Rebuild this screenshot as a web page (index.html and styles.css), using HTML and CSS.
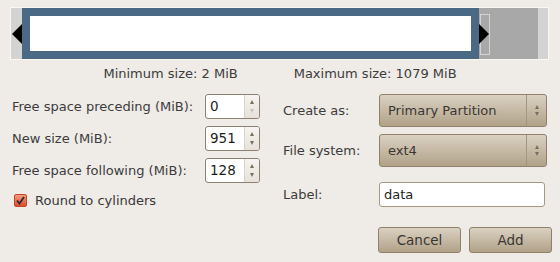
FILE: index.html
```html
<!DOCTYPE html>
<html lang="en">
<head>
    <meta charset="UTF-8">
    <title>Create new Partition</title>
    <link rel="stylesheet" href="styles.css">
</head>
<body>
    <!-- Barra da partição -->
    <div class="frame">
        <div class="gap-left"></div>
        <div class="part"><div class="part-inner"></div></div>
        <div class="gap-right"></div>
        <div class="gap-end"></div>
        <div class="handle-left"></div>
        <div class="handle-box"></div>
        <div class="handle-right"></div>
    </div>

    <div class="limits">
        <span>Minimum size: 2 MiB</span>
        <span>Maximum size: 1079 MiB</span>
    </div>

    <div class="form">
        <div class="col-left">
            <div class="row">
                <label>Free space preceding (MiB):</label>
                <div class="spin">
                    <span class="spin-value">0</span>
                    <span class="spin-btns"><i class="up"></i><i class="down off"></i></span>
                </div>
            </div>
            <div class="row">
                <label>New size (MiB):</label>
                <div class="spin">
                    <span class="spin-value">951</span>
                    <span class="spin-btns"><i class="up"></i><i class="down"></i></span>
                </div>
            </div>
            <div class="row">
                <label>Free space following (MiB):</label>
                <div class="spin">
                    <span class="spin-value">128</span>
                    <span class="spin-btns"><i class="up"></i><i class="down"></i></span>
                </div>
            </div>
            <div class="check-row">
                <span class="check">
                    <svg width="9" height="9" viewBox="0 0 9 9"><path d="M1 4.5 L3.5 7.5 L8 1" fill="none" stroke="#2b2b2b" stroke-width="1.8"/></svg>
                </span>
                <span>Round to cylinders</span>
            </div>
        </div>

        <div class="col-right">
            <div class="row combo-row">
                <label>Create as:</label>
                <div class="combo">
                    <span class="combo-text">Primary Partition</span>
                    <span class="combo-arrows"><i class="up"></i><i class="down"></i></span>
                </div>
            </div>
            <div class="row combo-row">
                <label>File system:</label>
                <div class="combo">
                    <span class="combo-text">ext4</span>
                    <span class="combo-arrows"><i class="up"></i><i class="down"></i></span>
                </div>
            </div>
            <div class="row entry-row">
                <label>Label:</label>
                <div class="entry">data</div>
            </div>
            <div class="buttons">
                <button>Cancel</button>
                <button>Add</button>
            </div>
        </div>
    </div>
</body>
</html>
```

FILE: styles.css
```css
/* Estilos básicos */
body {
    margin: 0;
    background-color: #efebe7;
    color: #3c3c3c;
    font-family: 'DejaVu Sans', sans-serif;
    font-size: 13px;
}

/* Barra da partição */
.frame {
    position: relative;
    display: flex;
    width: 537px;
    height: 51px;
    margin: 7px 0 0 10px;
    border: 1px solid #fbf8f1;
}

.gap-left {
    width: 11px;
    background-color: #d3d3d3;
}

.part {
    width: 441px;
    padding: 8px;
    background-color: #4a6984;
}

.part-inner {
    height: 100%;
    background-color: #fff;
}

.gap-right {
    width: 59px;
    background-color: #a8a8a8;
}

.gap-end {
    width: 10px;
    background-color: #d3d3d3;
}

.handle-left {
    position: absolute;
    left: 1px;
    top: 16px;
    border-right: 10px solid #000;
    border-top: 10px solid transparent;
    border-bottom: 10px solid transparent;
}

.handle-box {
    position: absolute;
    left: 469px;
    top: 6px;
    width: 8px;
    height: 39px;
    border: 1px solid #d4d4d4;
}

.handle-right {
    position: absolute;
    left: 468px;
    top: 16px;
    border-left: 10px solid #000;
    border-top: 10px solid transparent;
    border-bottom: 10px solid transparent;
}

.limits {
    display: flex;
    justify-content: center;
    gap: 56px;
    margin-top: 6px;
    height: 16px;
    line-height: 16px;
}

/* Formulário */
.form {
    display: flex;
    margin-top: 12px;
    padding-left: 12px;
}

.col-left {
    width: 248px;
    display: flex;
    flex-direction: column;
    gap: 7px;
}

.col-right {
    margin-left: 23px;
    display: flex;
    flex-direction: column;
    gap: 7px;
}

.row {
    display: flex;
    align-items: center;
}

.col-left .row label {
    width: 193px;
}

.col-right .row label {
    width: 96px;
}

.spin {
    display: flex;
    width: 53px;
    height: 23px;
    border: 1px solid #8d8271;
    border-radius: 3px;
    background-color: #fff;
    overflow: hidden;
}

.spin-value {
    flex: 1;
    padding-left: 4px;
    line-height: 23px;
    color: #1e1e1e;
    font-size: 13.5px;
}

.spin-btns {
    width: 14px;
    display: flex;
    flex-direction: column;
    align-items: center;
    justify-content: center;
    gap: 5px;
    border-left: 1px solid #d8d2c8;
    background: linear-gradient(#f6f4f0, #e6e1d9);
}

i.up, i.down {
    display: block;
    border-left: 2.5px solid transparent;
    border-right: 2.5px solid transparent;
}

i.up {
    border-bottom: 4px solid #77705f;
}

i.down {
    border-top: 4px solid #77705f;
}

i.off {
    border-top-color: #c9c2b6;
}

.check-row {
    display: flex;
    align-items: center;
    gap: 8px;
    margin-top: 1px;
    margin-left: 2px;
    height: 18px;
    color: #383838;
}

.check {
    display: flex;
    align-items: center;
    justify-content: center;
    width: 11px;
    height: 11px;
    border: 1px solid #c2462c;
    border-radius: 2px;
    background: linear-gradient(#f59a7c, #de4b30);
}

.combo-row {
    height: 33px;
}

.combo {
    display: flex;
    width: 166px;
    height: 31px;
    border: 1px solid #8f806a;
    border-radius: 3px;
    background: linear-gradient(#dad1c2, #b1a288);
}

.combo-text {
    flex: 1;
    padding-left: 8px;
    line-height: 31px;
    color: #3a3632;
    font-size: 13px;
}

.combo-arrows {
    width: 19px;
    display: flex;
    flex-direction: column;
    align-items: center;
    justify-content: center;
    gap: 3px;
    border-left: 1px solid #a39580;
}

.entry-row {
    margin-top: 8px;
}

.entry {
    width: 160px;
    height: 23px;
    padding-left: 4px;
    border: 1px solid #a69982;
    border-radius: 3px;
    background-color: #fff;
    line-height: 23px;
    color: #1e1e1e;
}

.buttons {
    display: flex;
    gap: 8px;
    margin-top: 13px;
    margin-left: 95px;
}

button {
    width: 83px;
    height: 26px;
    border: 1px solid #8f806a;
    border-radius: 3px;
    background: linear-gradient(#dad1c2, #b1a288);
    color: #3a3632;
    font-family: 'DejaVu Sans', sans-serif;
    font-size: 13.5px;
}
```
